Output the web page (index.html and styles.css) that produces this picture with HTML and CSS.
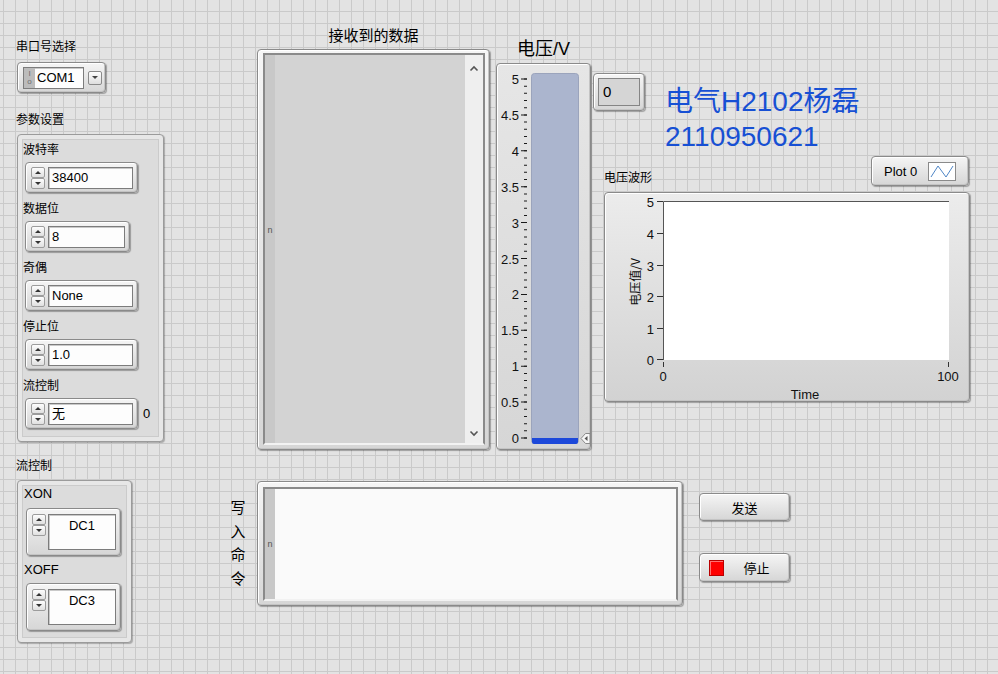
FILE: index.html
```html
<!DOCTYPE html>
<html lang="zh-CN">
<head>
<meta charset="utf-8">
<title>串口通信前面板</title>
<link rel="stylesheet" href="styles.css">
</head>
<body>
<div class="panel">

  <div class="obj o-serial">
    <div class="lbl">串口号选择</div>
    <div class="frame visa">
      <div class="field visa-field"><span class="io"><b>I</b><b>o</b></span><span class="val">COM1</span></div>
      <div class="ddbtn"></div>
    </div>
  </div>

  <div class="obj o-param">
    <div class="lbl">参数设置</div>
    <div class="cluster c-param">
      <div class="cluster-in">
        <div class="lbl">波特率</div>
        <div class="frame num w113 item-ctl"><div class="spin"><i class="up"></i><i class="dn"></i></div><div class="field">38400</div></div>
        <div class="lbl">数据位</div>
        <div class="frame num w105 item-ctl"><div class="spin"><i class="up"></i><i class="dn"></i></div><div class="field">8</div></div>
        <div class="lbl">奇偶</div>
        <div class="frame num w113 item-ctl"><div class="spin"><i class="up"></i><i class="dn"></i></div><div class="field">None</div></div>
        <div class="lbl">停止位</div>
        <div class="frame num w113 item-ctl"><div class="spin"><i class="up"></i><i class="dn"></i></div><div class="field">1.0</div></div>
        <div class="lbl">流控制</div>
        <div class="row item-ctl">
          <div class="frame num w113"><div class="spin"><i class="up"></i><i class="dn"></i></div><div class="field">无</div></div>
          <span class="zero">0</span>
        </div>
      </div>
    </div>
  </div>

  <div class="obj o-flow">
    <div class="lbl">流控制</div>
    <div class="cluster c-flow">
      <div class="cluster-in">
        <div class="lbl">XON</div>
        <div class="frame dc"><div class="spin"><i class="up"></i><i class="dn"></i></div><div class="field">DC1</div></div>
        <div class="lbl xoff">XOFF</div>
        <div class="frame dc dc2"><div class="spin"><i class="up"></i><i class="dn"></i></div><div class="field">DC3</div></div>
      </div>
    </div>
  </div>

  <div class="obj o-recv">
    <div class="big-lbl">接收到的数据</div>
    <div class="frame strbox">
      <div class="sunken strin">
        <div class="strip strip-recv">n</div>
        <div class="strmain"></div>
        <div class="scroll">
          <svg width="10" height="7" viewBox="0 0 10 7"><polyline points="1.5,5.5 5,2 8.5,5.5" fill="none" stroke="#555" stroke-width="1.6"/></svg>
          <svg width="10" height="7" viewBox="0 0 10 7"><polyline points="1.5,1.5 5,5 8.5,1.5" fill="none" stroke="#555" stroke-width="1.6"/></svg>
        </div>
      </div>
    </div>
  </div>

  <div class="obj o-tank">
    <div class="tank-lbl">电压/V</div>
    <div class="frame tankbox">
      <svg class="tank-svg" width="93" height="385" viewBox="0 0 93 385">
        <rect x="34.5" y="9.5" width="47" height="370" rx="3" fill="#abb5ce" stroke="#9ba4bc"/>
        <path d="M35 374 H81 V378 Q81 380 79 380 H37 Q35 380 35 378 Z" fill="#1c48da"/>
        <line x1="28.5" y1="14.5" x2="28.5" y2="375" stroke="#1a1a1a" stroke-width="3" stroke-dasharray="1 6.18"/>
        <line x1="27" y1="14.5" x2="27" y2="375" stroke="#1a1a1a" stroke-width="6" stroke-dasharray="1 34.9"/>
        <g font-family="Liberation Sans, sans-serif" font-size="13" text-anchor="end" fill="#111" dominant-baseline="central">
          <text x="22" y="15">5</text>
          <text x="22" y="51">4.5</text>
          <text x="22" y="87">4</text>
          <text x="22" y="123">3.5</text>
          <text x="22" y="159">3</text>
          <text x="22" y="195">2.5</text>
          <text x="22" y="230">2</text>
          <text x="22" y="266">1.5</text>
          <text x="22" y="302">1</text>
          <text x="22" y="338">0.5</text>
          <text x="22" y="374">0</text>
        </g>
        <polygon points="84,374.5 88.5,369.5 93,369.5 93,379.5 88.5,379.5" fill="#f6f6f6" stroke="#8a8a8a"/>
        <polygon points="87.5,374.5 90.5,372 90.5,377" fill="#555"/>
      </svg>
    </div>
  </div>

  <div class="obj frame o-ind"><div class="ind-field">0</div></div>

  <div class="obj o-title">
    <div>电气H2102杨磊</div>
    <div>2110950621</div>
  </div>

  <div class="obj frame o-legend">
    <span>Plot 0</span>
    <svg class="swatch" width="28" height="19" viewBox="0 0 28 19"><rect x="0.5" y="0.5" width="27" height="18" fill="#fff" stroke="#8a8a8a"/><polyline points="3,15 10,4 18,15 25,4" fill="none" stroke="#4f86c6" stroke-width="1"/></svg>
  </div>

  <div class="obj o-graph">
    <div class="lbl">电压波形</div>
    <div class="frame graphbox">
      <svg width="364" height="208" viewBox="0 0 364 208">
        <rect x="58" y="8" width="286" height="159" fill="#ffffff"/>
        <path d="M58.5 167 V8.5 H344" stroke="#555" fill="none"/>
        <path d="M52 8.5H58 M52 40.5H58 M52 72.5H58 M52 103.5H58 M52 135.5H58 M52 166.5H58 M58.5 169V174 M343.5 169V174" stroke="#333" fill="none"/>
        <g font-family="Liberation Sans, sans-serif" font-size="13" fill="#111" dominant-baseline="central">
          <g text-anchor="end">
            <text x="49" y="9">5</text>
            <text x="49" y="41">4</text>
            <text x="49" y="73">3</text>
            <text x="49" y="104">2</text>
            <text x="49" y="136">1</text>
            <text x="49" y="167">0</text>
          </g>
          <g text-anchor="middle">
            <text x="58" y="183">0</text>
            <text x="343" y="183">100</text>
            <text x="200" y="201">Time</text>
          </g>
        </g>
        <text transform="translate(29,89) rotate(-90)" text-anchor="middle" dominant-baseline="central" font-family="Noto Sans CJK SC, sans-serif" font-size="12" fill="#111">电压值/V</text>
      </svg>
    </div>
  </div>

  <div class="obj o-wlabel"><div>写</div><div>入</div><div>命</div><div>令</div></div>

  <div class="obj frame o-write">
    <div class="sunken wrin">
      <div class="strip">n</div>
      <div class="wrmain"></div>
    </div>
  </div>

  <div class="obj frame btn o-send">发送</div>
  <div class="obj frame btn o-stop"><span class="led"></span><span class="stop-txt">停止</span></div>

</div>
</body>
</html>
```

FILE: styles.css
```css
* { box-sizing: border-box; margin: 0; padding: 0; }
html, body { width: 998px; height: 674px; overflow: hidden; }
body {
  background: #e3e3e3;
  font-family: "Liberation Sans", "Noto Sans CJK SC", sans-serif;
  font-size: 12px;
  color: #000;
}
.panel {
  position: relative;
  width: 998px;
  height: 674px;
  background-color: #e3e3e3;
  background-image:
    linear-gradient(to right, #cacaca 1px, transparent 1px),
    linear-gradient(to bottom, #cacaca 1px, transparent 1px);
  background-size: 12px 12px;
  background-position: 3px 11px;
}
.obj { position: absolute; }
.lbl { font-size: 12px; line-height: 16px; white-space: nowrap; }

.frame {
  border: 1px solid #8a8a8a;
  border-radius: 4px;
  background: linear-gradient(#f5f5f5, #d6d6d6);
  box-shadow: inset 1px 1px 0 #ffffff, inset -1px -1px 0 #c4c4c4, 1px 1px 1px rgba(0,0,0,.3);
}
.field {
  background: #fdfdfd;
  border: 1px solid #7c7c7c;
  box-shadow: inset 1px 1px 0 #c9c9c9;
}
.sunken {
  border: 2px solid;
  border-color: #8a8a8a #8a8a8a #f2f2f2 #8a8a8a;
}

/* serial port */
.o-serial { left: 16px; top: 39px; }
.visa {
  width: 89px; height: 31px;
  margin: 7px 0 0 1px;
  display: flex; align-items: center;
  padding: 0 3px 0 5px; gap: 4px;
}
.visa-field { width: 61px; height: 22px; display: flex; align-items: stretch; }
.io {
  width: 11px; background: #bcbcbc;
  display: flex; flex-direction: column; align-items: center; justify-content: center;
  font-size: 8px; line-height: 8px; color: #6e6e6e;
}
.io b { font-weight: normal; }
.val { padding-left: 2px; font-size: 13px; line-height: 20px; }
.ddbtn {
  width: 14px; height: 14px;
  border: 1px solid #8a8a8a; border-radius: 2px;
  background: linear-gradient(#fdfdfd, #dedede);
  display: flex; align-items: center; justify-content: center;
}
.ddbtn::after {
  content: ""; border-left: 3px solid transparent; border-right: 3px solid transparent;
  border-top: 3px solid #444;
}

/* clusters */
.cluster {
  border: 1px solid #9b9b9b;
  border-radius: 4px;
  background: #e7e7e7;
  padding: 4px;
  box-shadow: 1px 1px 1px rgba(0,0,0,.25);
}
.cluster-in {
  height: 100%;
  border: 1px solid #cbcbcb;
  background: #dcdcdc;
}
.o-param { left: 16px; top: 112px; }
.c-param { width: 147px; height: 308px; margin: 6px 0 0 1px; }
.c-param .cluster-in { padding-top: 2px; }
.item-ctl { margin: 4px 0 8px 2px; }

.num {
  height: 31px;
  display: flex; align-items: center;
  padding: 0 4px 0 5px; gap: 3px;
}
.w113 { width: 113px; }
.w105 { width: 105px; }
.num .field { flex: 1; height: 22px; font-size: 13px; line-height: 20px; padding-left: 3px; }
.spin { width: 14px; display: flex; flex-direction: column; }
.spin i {
  display: flex; align-items: center; justify-content: center;
  height: 11px;
  border: 1px solid #9c9c9c; border-radius: 2px;
  background: linear-gradient(#fdfdfd, #e0e0e0);
}
.spin i::after { content: ""; border-left: 3px solid transparent; border-right: 3px solid transparent; }
.spin .up::after { border-bottom: 3px solid #333; }
.spin .dn::after { border-top: 3px solid #333; }
.row { display: flex; align-items: center; gap: 5px; }
.row .zero { font-size: 13px; }

.o-flow { left: 16px; top: 458px; }
.c-flow { width: 115px; height: 163px; margin: 6px 0 0 1px; }
.c-flow .cluster-in { padding-left: 1px; }
.c-flow .lbl { font-size: 13px; }
.dc {
  width: 95px; height: 48px;
  margin: 6px 0 0 2px;
  display: flex; align-items: flex-start;
  padding: 5px 4px 0 5px; gap: 2px;
}
.dc .field { width: 68px; height: 36px; text-align: center; font-size: 13px; line-height: 18px; padding-top: 2px; }
.xoff { margin-top: 6px; }
.dc2 { margin-top: 5px; }

/* received string */
.o-recv { left: 257px; top: 26px; width: 233px; }
.big-lbl { font-size: 15px; line-height: 20px; text-align: center; }
.strbox { height: 401px; margin-top: 3px; padding: 3px 4px 4px 5px; }
.strin { height: 100%; display: flex; background: #d3d3d3; }
.strip {
  width: 10px; background: #c8c8c8;
  display: flex; align-items: center; justify-content: center;
  font-size: 9px; color: #555;
}
.strip-recv { align-items: flex-start; padding-top: 170px; }
.strmain { flex: 1; }
.scroll {
  width: 18px; background: #efefef;
  display: flex; flex-direction: column; justify-content: space-between; align-items: center;
  padding: 10px 0 6px;
}
.scroll svg { display: block; }

/* tank */
.o-tank { left: 496px; top: 38px; width: 95px; }
.tank-lbl { font-size: 18px; line-height: 22px; text-align: center; }
.tankbox { height: 387px; margin-top: 3px; background: linear-gradient(#e6e6e6, #d6d6d6); }
.tank-svg { display: block; }

.o-ind { left: 593px; top: 73px; width: 52px; height: 38px; padding: 4px; }
.ind-field {
  height: 100%; background: #d5d5d5; border: 1px solid #858585;
  font-size: 15px; line-height: 26px; padding-left: 4px;
}

.o-title { left: 665px; top: 84px; font-size: 28px; line-height: 35px; color: #1750d4; white-space: nowrap; }

.o-legend {
  left: 871px; top: 156px; width: 98px; height: 30px;
  display: flex; align-items: center; justify-content: space-between;
  padding: 0 12px 0 12px; font-size: 13px;
}
.swatch { display: block; }

.o-graph { left: 604px; top: 170px; }
.graphbox { width: 366px; height: 210px; margin-top: 6px; background: linear-gradient(#ececec, #d2d2d2); }
.graphbox svg { display: block; }

/* write */
.o-wlabel { left: 230px; top: 496px; width: 16px; font-size: 15px; line-height: 23.7px; text-align: center; }
.o-write { left: 257px; top: 481px; width: 426px; height: 125px; padding: 5px 4px 4px 5px; }
.wrin { height: 100%; display: flex; background: #fafafa; }
.wrmain { flex: 1; }

.btn { display: flex; align-items: center; justify-content: center; font-size: 13px; }
.o-send { left: 699px; top: 493px; width: 91px; height: 28px; }
.o-stop { left: 699px; top: 553px; width: 91px; height: 29px; padding-left: 9px; justify-content: flex-start; }
.led { width: 15px; height: 16px; background: #fe0000; border: 1px solid #b80000; box-shadow: inset 1px 1px 0 #ff7070; }
.stop-txt { flex: 1; text-align: center; }
```
